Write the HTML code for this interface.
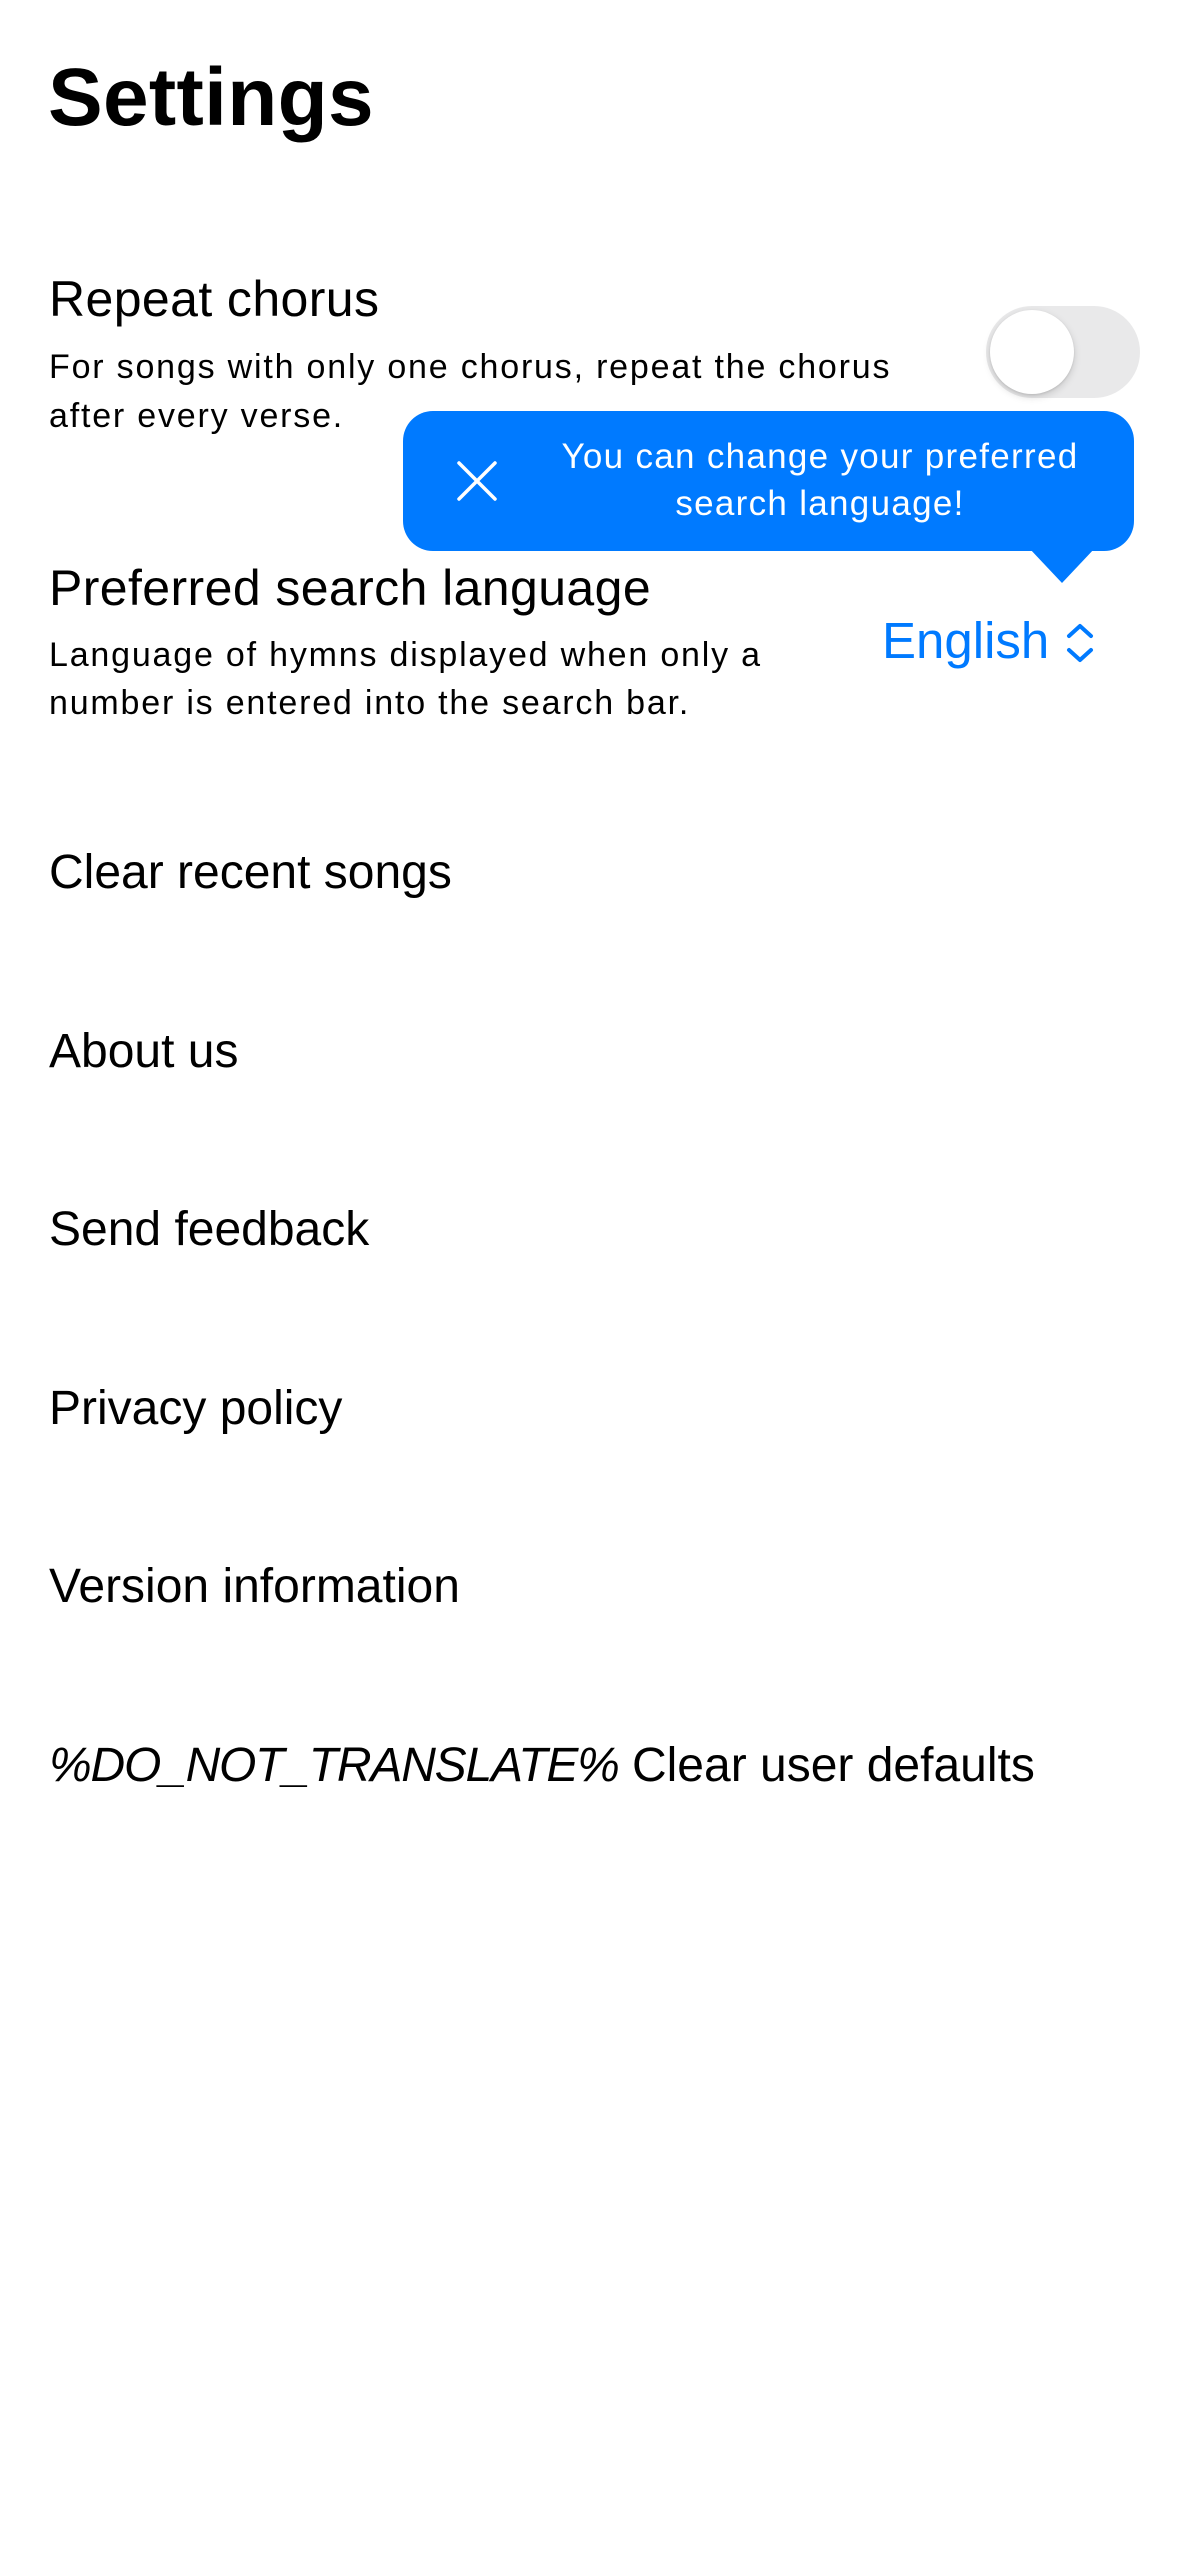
<!DOCTYPE html>
<html><head><meta charset="utf-8"><style>
html,body{margin:0;padding:0;background:#fff;width:1179px;height:2556px;overflow:hidden;}
body{font-family:"Liberation Sans",sans-serif;color:#000;position:relative;}
.t{position:absolute;white-space:nowrap;line-height:1;}
.h{font-size:48px;}
.h2{font-size:50px;letter-spacing:0.4px;}
.s{font-size:34px;letter-spacing:1.8px;}
</style></head><body>
<div class="t" style="left:48px;top:57px;font-size:82px;font-weight:bold;letter-spacing:0.3px;">Settings</div>

<div class="t h2" style="left:49px;top:274px;">Repeat chorus</div>
<div class="t s" style="left:49px;top:350px;">For songs with only one chorus, repeat the chorus</div>
<div class="t s" style="left:49px;top:399px;">after every verse.</div>

<div style="position:absolute;left:986px;top:306px;width:154px;height:92px;border-radius:46px;background:#e9e9ea;"></div>
<div style="position:absolute;left:990px;top:310px;width:84px;height:84px;border-radius:50%;background:#fff;box-shadow:0 3px 8px rgba(0,0,0,0.15),0 1px 2px rgba(0,0,0,0.1);"></div>

<div style="position:absolute;left:403px;top:411px;width:731px;height:140px;border-radius:30px;background:#007aff;"></div>
<svg style="position:absolute;left:1029px;top:548px" width="66" height="36"><polygon points="0,0 66,0 33,35" fill="#007aff"/></svg>
<svg style="position:absolute;left:455px;top:459px" width="44" height="44"><path d="M4 4 L40 40 M40 4 L4 40" stroke="#fff" stroke-width="3.5" stroke-linecap="round"/></svg>
<div class="t" style="left:520px;width:600px;text-align:center;top:439px;font-size:35px;letter-spacing:1.3px;color:#fff;">You can change your preferred</div>
<div class="t" style="left:520px;width:600px;text-align:center;top:486px;font-size:35px;letter-spacing:1.3px;color:#fff;">search language!</div>

<div class="t h2" style="left:49px;top:563px;">Preferred search language</div>
<div class="t s" style="left:49px;top:638px;">Language of hymns displayed when only a</div>
<div class="t s" style="left:49px;top:686px;">number is entered into the search bar.</div>

<div class="t" style="left:882px;top:615px;font-size:51px;color:#007aff;">English</div>
<svg style="position:absolute;left:1064px;top:619px" width="32" height="48"><path d="M5 17 L16 7 L27 17 M5 31 L16 41 L27 31" fill="none" stroke="#007aff" stroke-width="4" stroke-linecap="round" stroke-linejoin="round"/></svg>

<div class="t h" style="left:49px;top:849px;">Clear recent songs</div>
<div class="t h" style="left:49px;top:1028px;">About us</div>
<div class="t h" style="left:49px;top:1206px;">Send feedback</div>
<div class="t h" style="left:49px;top:1385px;">Privacy policy</div>
<div class="t h" style="left:49px;top:1563px;">Version information</div>
<div class="t h" style="left:49px;top:1742px;"><i style="letter-spacing:-1.2px">%DO_NOT_TRANSLATE%</i> Clear user defaults</div>
</body></html>
